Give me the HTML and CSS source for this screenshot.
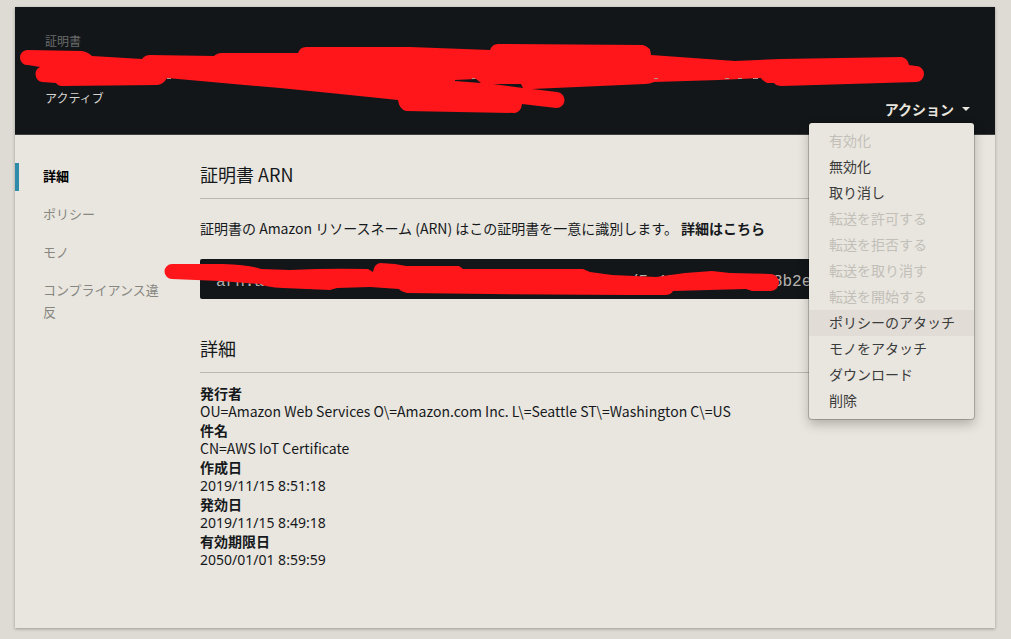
FILE: index.html
```html
<!DOCTYPE html>
<html lang="ja">
<head>
<meta charset="utf-8">
<meta name="viewport" content="width=device-width, initial-scale=1">
<title>証明書</title>
<link rel="stylesheet" href="styles.css">
</head>
<body>
<div class="card">
  <header class="header">
    <div class="summary">
      <p class="kind">証明書</p>
      <p class="status">アクティブ</p>
    </div>
    <div class="actions">
      <button class="actions-toggle" type="button" aria-expanded="true">アクション<span class="caret"></span></button>
      <ul class="menu">
        <li><button type="button" disabled>有効化</button></li>
        <li><button type="button">無効化</button></li>
        <li><button type="button">取り消し</button></li>
        <li><button type="button" disabled>転送を許可する</button></li>
        <li><button type="button" disabled>転送を拒否する</button></li>
        <li><button type="button" disabled>転送を取り消す</button></li>
        <li><button type="button" disabled>転送を開始する</button></li>
        <li><button class="is-hovered" type="button">ポリシーのアタッチ</button></li>
        <li><button type="button">モノをアタッチ</button></li>
        <li><button type="button">ダウンロード</button></li>
        <li><button type="button">削除</button></li>
      </ul>
    </div>
  </header>
  <div class="body">
    <nav class="tabs">
      <a class="tab is-active" href="#details">詳細</a>
      <a class="tab" href="#policies">ポリシー</a>
      <a class="tab" href="#things">モノ</a>
      <a class="tab" href="#noncompliance">コンプライアンス違反</a>
    </nav>
    <main class="content">
      <section class="section">
        <h2 class="title">証明書 ARN</h2>
        <p class="intro">証明書の Amazon リソースネーム (ARN) はこの証明書を一意に識別します。 <a class="more" href="#arn">詳細はこちら</a></p>
        <pre class="arn" id="arn">arn:a                                      /5c15          8b2e</pre>
      </section>
      <section class="section" id="details">
        <h2 class="title">詳細</h2>
        <dl class="facts">
          <dt>発行者</dt>
          <dd>OU=Amazon Web Services O\=Amazon.com Inc. L\=Seattle ST\=Washington C\=US</dd>
          <dt>件名</dt>
          <dd>CN=AWS IoT Certificate</dd>
          <dt>作成日</dt>
          <dd class="date">2019/11/15 8:51:18</dd>
          <dt>発効日</dt>
          <dd class="date">2019/11/15 8:49:18</dd>
          <dt>有効期限日</dt>
          <dd class="date">2050/01/01 8:59:59</dd>
        </dl>
      </section>
    </main>
  </div>
  <svg class="redaction" width="980" height="320" viewBox="15 7 980 320" aria-hidden="true">
    <g fill="#fe161b">
      <path d="M27 50 L82 51 Q88 52 92 56 L142 59 Q145 55 150 55 L214 56 Q217 53 222 53 L298 53 Q300 47 306 47 L410 47 L490 50 Q492 44 498 44 L643 45 Q651 47 651 55 L735 61 L780 59 L902 57 Q908 59 909 65 L916 66 A8 8 0 0 1 916 82 L782 86 Q776 86 774 83 L767 83 Q763 81 761 78 L719 80 L654 82 Q650 84 645 84 L532 89 L557 92 A8 8 0 0 1 556 108 L522 104 Q521 112 515 113 L406 111 Q399 109 398 100 L340 94 L280 88 L167 78 Q163 85 157 85 L62 86 Q58 86 56 83 L42 82 A8 8 0 0 1 40 67 L28 65 A7.5 7.5 0 0 1 27 50 Z"/>
      <path d="M172 264 L223 264 Q250 265 261 269 L290 270 Q330 268 368 269 L373 272 Q374 264 380 263 L395 264 L406 266 L459 266 L463 269 L583 269 L590 272 L612 275 L656 277 L685 273 L712 271 L730 273 L770 274 A8 8 0 0 1 771 291 L752 291 L746 289 L673 291 Q671 295 665 295 L631 295 L490 294 L407 293 Q400 291 399 289 L370 287 L337 288 L330 290 L283 288 Q265 287 261 284 L220 281 L172 279 A7.5 7.5 0 0 1 172 264 Z"/>
    </g>
    <path d="M455 80 L476 79 L481 83 L455 81 Z M493 84 L521 84 L523 88 Z" fill="#131619"/>
    <path d="M167 78.500h4M472 78.500h3M654 78.500h4M725 78.500h4M738 78.500h4M753 78.500h5" stroke="#b9958f" fill="none"/>
  </svg>
</div>
</body>
</html>
```
FILE: styles.css
```css
* {
  box-sizing: border-box;
}

body {
  margin: 0;
  padding: 7px 16px 11px 15px;
  min-height: 100vh;
  display: flex;
  background: #dedbd4;
  color: #16191c;
  font: 14px/18px "Noto Sans CJK JP", sans-serif;
}

p, h2, ul, dl, dd, pre {
  margin: 0;
  padding: 0;
}

a {
  color: inherit;
  text-decoration: none;
}

button {
  border: 0;
  background: none;
  color: inherit;
  font: inherit;
}

.card {
  position: relative;
  flex: 1;
  min-width: 0;
  background: #e9e6df;
  box-shadow: 0 1px 3px rgba(0, 0, 0, 0.3);
}

.header {
  display: flex;
  justify-content: space-between;
  align-items: flex-end;
  padding: 25px 21px 16px 30px;
  background: #131619;
  border-bottom: 1px solid #3c3f40;
}

.summary {
  display: grid;
  gap: 39px;
  padding-bottom: 11px;
  color: #d6d4cf;
  font-size: 12px;
}

.kind {
  color: #6a6c6c;
}

.actions {
  position: relative;
}

.actions-toggle {
  display: flex;
  align-items: center;
  gap: 8px;
  padding: 0 4px;
  color: #e9e6df;
  font-weight: 700;
}

.caret {
  border: 4px solid transparent;
  border-top-color: #e9e6df;
  border-bottom: 0;
}

.menu {
  position: absolute;
  z-index: 2;
  top: 100%;
  right: 0;
  min-width: 165px;
  margin-top: 5px;
  padding: 5px 0;
  list-style: none;
  white-space: nowrap;
  background: #e9e6df;
  border-radius: 3px;
  box-shadow: 0 0 0 1px rgba(0, 0, 0, 0.2), 0 5px 12px rgba(0, 0, 0, 0.25);
}

.menu button {
  display: block;
  width: 100%;
  padding: 3px 19px 5px 20px;
  text-align: left;
  color: #3a3b3b;
}

.menu button:disabled {
  color: #c2bfb9;
}

.menu .is-hovered {
  background: #e1dcd6;
}

.body {
  display: grid;
  grid-template-columns: 185px minmax(0, 1fr);
  padding: 28px 29px 48px 0;
}

.tabs {
  display: grid;
  align-content: start;
  gap: 10px;
  color: #878681;
  font-size: 13px;
  line-height: 22px;
}

.tab {
  padding: 2px 32px 4px 28px;
}

.is-active {
  padding-left: 24px;
  border-left: 4px solid #2e8ba9;
  color: #000;
  font-weight: 700;
}

.section + .section {
  margin-top: 38px;
}

.title {
  padding-bottom: 13px;
  border-bottom: 1px solid #bab7b1;
  font-size: 18px;
  line-height: 22px;
  font-weight: 400;
}

.intro {
  margin: 20px 0 22px;
}

.more {
  font-weight: 700;
}

.arn {
  overflow: hidden;
  padding: 13px 16px 7px;
  border-radius: 2px;
  background: #131619;
  color: #b5b3af;
  font: 16px/20px "Liberation Mono", monospace;
}

.facts {
  margin-top: 11px;
}

.facts dt {
  font-weight: 700;
}

.facts dd {
  line-height: 19px;
}

.facts .date {
  font-family: "Noto Sans", sans-serif;
}

.redaction {
  position: absolute;
  z-index: 1;
  top: 0;
  left: 0;
  pointer-events: none;
}
```
